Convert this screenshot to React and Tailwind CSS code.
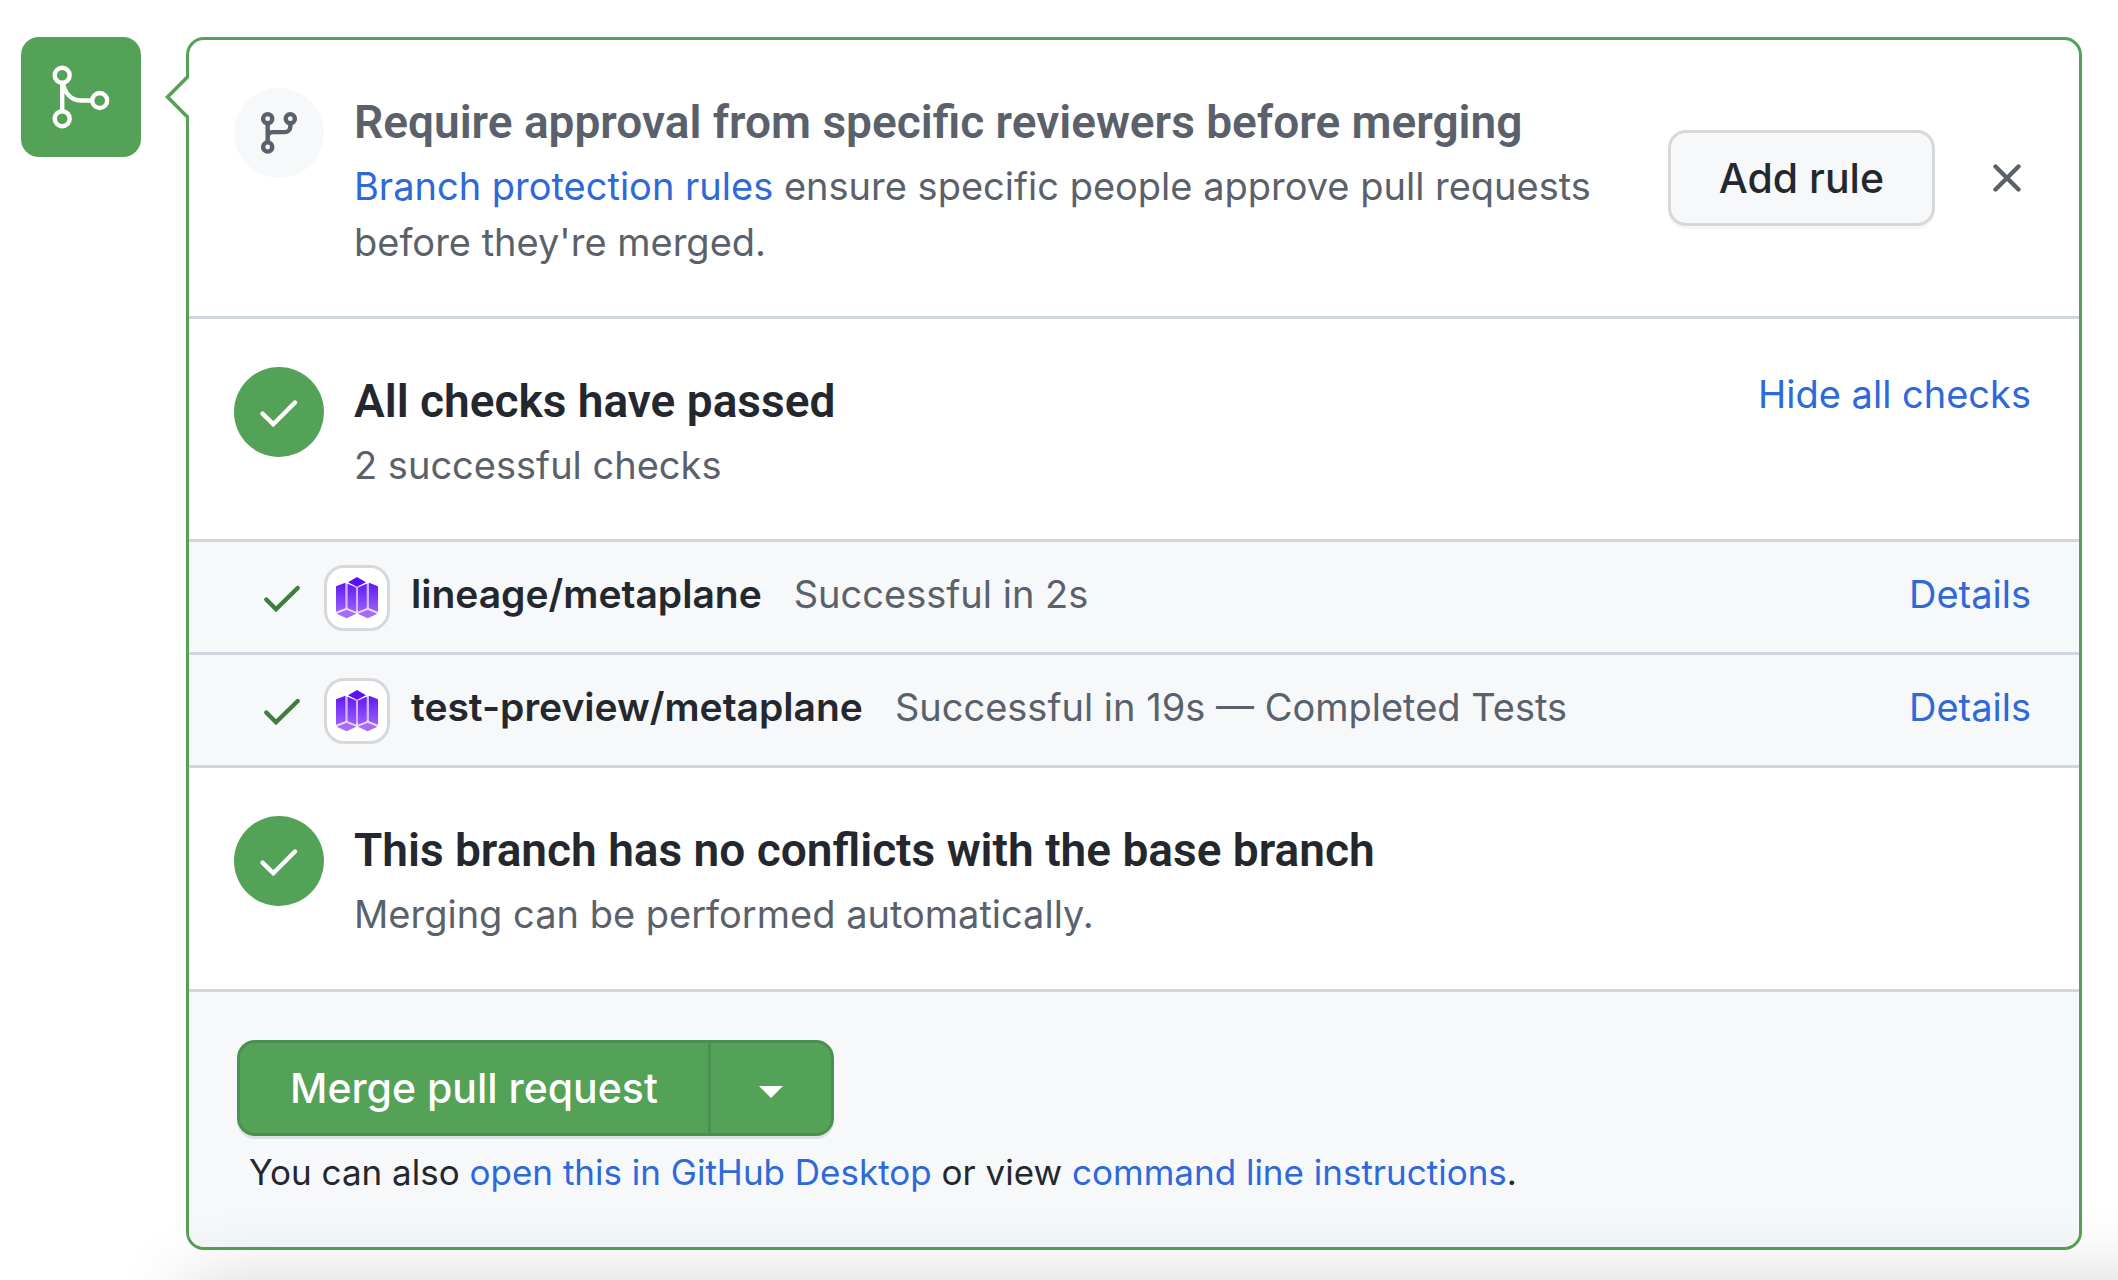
import React from 'react';

const checks = [
  { name: 'lineage/metaplane', status: 'Successful in 2s' },
  { name: 'test-preview/metaplane', status: 'Successful in 19s — Completed Tests' },
];

function MergeIcon() {
  return (
    <svg viewBox="0 0 120 120" className="size-[120px]" fill="none" stroke="currentColor" strokeWidth="4.4" aria-hidden="true">
      <circle cx="41.2" cy="38.3" r="7.5" />
      <circle cx="41.2" cy="81.7" r="7.5" />
      <circle cx="78.7" cy="63.5" r="7.5" />
      <path d="M41.2 46v28M42 46c1.500 10 8.500 17.500 17.500 17.500H71" />
    </svg>
  );
}

function BranchIcon() {
  return (
    <svg viewBox="0 0 90 90" className="size-[90px]" fill="none" stroke="currentColor" strokeWidth="4.4" aria-hidden="true">
      <circle cx="33.7" cy="30.7" r="4.6" />
      <circle cx="56.3" cy="30.7" r="4.6" />
      <circle cx="33.7" cy="59" r="4.6" />
      <path d="M33.7 35.5v19M33.7 49c0-3.5 1.5-4.9 5-4.9h12.3a5.3 5.3 0 0 0 5.3-5.3v-3.3" />
    </svg>
  );
}

function StatusCheck() {
  return (
    <span className="mt-0.5 flex size-[90px] shrink-0 rounded-full bg-[#54a257] text-white">
      <svg viewBox="0 0 90 90" className="size-[90px]" fill="none" stroke="currentColor" strokeWidth="4.4" strokeLinecap="round" aria-hidden="true">
        <path d="M28.5 46.7L39.3 57.2L61 35.5" />
      </svg>
    </span>
  );
}

function SmallCheck() {
  return (
    <svg viewBox="0 0 48 48" className="mt-[10px] size-12 shrink-0 text-[#3d7d3e]" fill="none" stroke="currentColor" strokeWidth="4.4" strokeLinecap="round" aria-hidden="true">
      <path d="M8.3 24.5L18 34.2L39.7 13" />
    </svg>
  );
}

function AppLogo({ id }) {
  const fill = `url(#${id})`;
  return (
    <span className="size-[66px] shrink-0 rounded-[20px] border-3 border-[#d6d9dc] bg-white">
      <svg viewBox="21 24 180 180" className="size-full" aria-hidden="true">
        <defs>
          <linearGradient id={id} gradientUnits="userSpaceOnUse" x1="0" y1="68" x2="0" y2="155">
            <stop offset="0" stopColor="#5f18f6" />
            <stop offset="1" stopColor="#9b5ff8" />
          </linearGradient>
        </defs>
        <path d="M74 69L111 80L149 69V150L111 159L74 150Z" fill="#cfb4fb" />
        <path d="M48 150L80 142L111 150L143 142L174 150V160L111 160L48 160Z" fill="#e9defd" />
        <path d="M84 67L111 51L138 67L111 80Z" fill="#5a10f4" />
        <path d="M48 79L76 68V145L48 155Z" fill={fill} />
        <path d="M83 71L108 83V155L83 145Z" fill={fill} />
        <path d="M114 83L140 71V145L114 155Z" fill={fill} />
        <path d="M147 68L174 79V155L147 145Z" fill={fill} />
        <path d="M50 161L80 149L109 161L80 175Z" fill="#a66cf8" />
        <path d="M113 161L143 149L172 161L143 175Z" fill="#a66cf8" />
      </svg>
    </span>
  );
}

function Link({ children }) {
  return (
    <a href="#" className="text-[#2e68d9]">
      {children}
    </a>
  );
}

function Heading({ children }) {
  return <h3 className="font-[Roboto,sans-serif] text-[46px] leading-[72px] font-semibold">{children}</h3>;
}

const section = 'flex items-start border-b-3 border-[#d1d6dd] pt-[46px] pr-12 pl-[45px]';
const bodyText = 'text-[38px] leading-[56px]';
const actionText = 'text-[38px] leading-[58px] text-[#2e68d9]';

export default function App() {
  return (
    <main className="relative flex min-h-screen items-start overflow-hidden bg-white pt-[37px] pr-9 pb-[29px] pl-[21px] font-[Inter,sans-serif] text-[#24282e]">
      <div className="mr-[45px] size-[120px] shrink-0 rounded-[18px] bg-[#54a257] text-white">
        <MergeIcon />
      </div>

      <div className="relative min-w-0 flex-1 rounded-[18px] border-3 border-[#54a257] bg-white">
        <svg viewBox="0 0 24 44" className="absolute top-[35px] -left-6 h-11 w-6" aria-hidden="true">
          <path d="M24 .5L2.5 22L24 43.5Z" fill="#fff" />
          <path d="M24 .5L2.5 22L24 43.5" fill="none" stroke="#54a257" strokeWidth="3.6" />
        </svg>

        <section className={`${section} pb-[46px]`}>
          <span className="mt-0.5 flex size-[90px] shrink-0 rounded-full bg-[#f6f8fa] text-[#5a616b]">
            <BranchIcon />
          </span>
          <div className="ml-[30px] min-w-0 flex-1 text-[#5a616b]">
            <Heading>Require approval from specific reviewers before merging</Heading>
            <p className={bodyText}>
              <Link>Branch protection rules</Link> ensure specific people approve pull requests before they're merged.
            </p>
          </div>
          <div className="ml-[30px] flex items-center gap-12 self-center">
            <button type="button" className="h-24 rounded-[18px] border-3 border-[#d6d8da] bg-[#f6f8fa] px-12 text-[41px] leading-[60px] font-medium shadow-[0_3px_0_rgba(27,31,36,0.04)]">
              Add rule
            </button>
            <button type="button" aria-label="Dismiss" className="flex size-12 items-center justify-center text-[#5a616b]">
              <svg viewBox="0 0 28 28" className="size-7" fill="none" stroke="currentColor" strokeWidth="4.4" strokeLinecap="round" aria-hidden="true">
                <path d="M2.5 2.5l23 23M25.5 2.5l-23 23" />
              </svg>
            </button>
          </div>
        </section>

        <section className={`${section} pb-[46px]`}>
          <StatusCheck />
          <div className="ml-[30px] min-w-0 flex-1">
            <Heading>All checks have passed</Heading>
            <p className={`${bodyText} text-[#5a616b]`}>2 successful checks</p>
          </div>
          <button type="button" className={actionText}>
            Hide all checks
          </button>
        </section>

        <ul>
          {checks.map((check, i) => (
            <li key={check.name} className="flex items-start border-b-3 border-[#d1d6dd] bg-[#f6f8fa] pt-[23px] pr-12 pb-[21px] pl-[69px]">
              <SmallCheck />
              <span className="mr-[21px] ml-[18px] flex">
                <AppLogo id={`logo-${i}`} />
              </span>
              <p className="flex min-w-0 flex-1 items-baseline gap-8 text-[38px] leading-[58px]">
                <strong className="text-[39px] font-semibold">{check.name}</strong>
                <span className="text-[#5a616b]">{check.status}</span>
              </p>
              <a href="#" className={actionText}>
                Details
              </a>
            </li>
          ))}
        </ul>

        <section className={`${section} pb-[47px]`}>
          <StatusCheck />
          <div className="ml-[30px] min-w-0 flex-1">
            <Heading>This branch has no conflicts with the base branch</Heading>
            <p className={`${bodyText} text-[#5a616b]`}>Merging can be performed automatically.</p>
          </div>
        </section>

        <footer className="rounded-b-[15px] bg-[#f6f8fa] px-12 pt-12 pb-[47px]">
          <div className="flex h-24 w-fit rounded-[18px] text-white shadow-[0_3px_0_rgba(27,31,36,0.1)]">
            <button type="button" className="rounded-l-[18px] border-3 border-r-0 border-[#4b9050] bg-[#54a257] px-[50px] text-[41px] leading-[60px] font-medium">
              Merge pull request
            </button>
            <button type="button" aria-label="Select merge method" className="flex w-[126px] items-center justify-center rounded-r-[18px] border-3 border-[#4b9050] bg-[#54a257]">
              <svg viewBox="0 0 24 12" className="mt-2 h-3 w-6" fill="currentColor" aria-hidden="true">
                <path d="M0 0H24L12 12Z" />
              </svg>
            </button>
          </div>
          <p className="mt-2 pl-3 text-[35px] leading-[56px]">
            You can also <Link>open this in GitHub Desktop</Link> or view <Link>command line instructions</Link>.
          </p>
        </footer>
      </div>

      <div className="pointer-events-none absolute top-full -right-40 left-[185px] h-40 shadow-[0_0_72px_rgba(0,0,0,0.16)]" />
    </main>
  );
}
